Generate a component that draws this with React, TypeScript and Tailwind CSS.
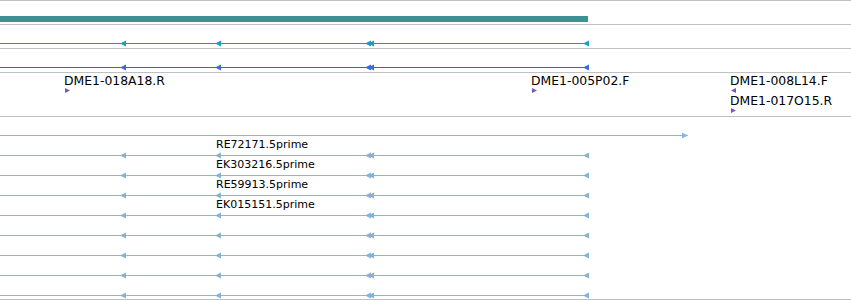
import React from "react";

const EXONS = [120, 215, 365, 368, 583];
const W = 851;

function LeftArrow({ x, y, color }: { x: number; y: number; color: string }) {
  return <polygon points={`${x},${y} ${x + 6},${y - 3} ${x + 6},${y + 3}`} fill={color} />;
}

function Strand({
  y,
  color,
  arrowColor,
  end = 588,
}: {
  y: number;
  color: string;
  arrowColor: string;
  end?: number;
}) {
  const cy = y + 0.5;
  return (
    <g>
      <line x1={0} y1={cy} x2={end} y2={cy} stroke={color} strokeWidth={1} />
      {EXONS.map((x) => (
        <LeftArrow key={x} x={x} y={cy} color={arrowColor} />
      ))}
    </g>
  );
}

function Feature({ label, dir }: { label: string; dir: "left" | "right" }) {
  return (
    <div className="flex flex-col h-[20px]">
      <span className="text-[12.4px] leading-[12px] text-black whitespace-nowrap">{label}</span>
      <svg width="6" height="6" className="mt-[1px] ml-[1px]">
        {dir === "right" ? (
          <polygon points="0,0 5,2.5 0,5" fill="#7858b8" />
        ) : (
          <polygon points="5,0 0,2.5 5,5" fill="#7858b8" />
        )}
      </svg>
    </div>
  );
}

export default function App() {
  const estRows = [38, 58, 78, 98, 118, 138, 158, 178];
  const estLabels = ["RE72171.5prime", "EK303216.5prime", "RE59913.5prime", "EK015151.5prime"];
  return (
    <div className="w-[851px] h-[300px] bg-white overflow-hidden font-['DejaVu_Sans',sans-serif] border-t border-[#c0c0c0]">
      {/* gene span */}
      <div className="h-[24px] border-b border-[#c0c0c0] pt-[15px]">
        <div className="w-[588px] h-[6px] bg-[#409191]" />
      </div>

      {/* transcript A */}
      <div className="h-[24px] border-b border-[#c0c0c0]">
        <svg width={W} height={23} className="block">
          <Strand y={18} color="#1a97b8" arrowColor="#1a9fc0" />
        </svg>
      </div>

      {/* transcript B */}
      <div className="h-[24px] border-b border-[#c0c0c0]">
        <svg width={W} height={23} className="block">
          <Strand y={18} color="#3464c8" arrowColor="#3a6cd4" />
        </svg>
      </div>

      {/* BAC ends */}
      <div className="relative h-[44px] border-b border-[#c0c0c0]">
        <div className="absolute left-[64px] top-[2px]">
          <Feature label="DME1-018A18.R" dir="right" />
        </div>
        <div className="absolute left-[531px] top-[2px]">
          <Feature label="DME1-005P02.F" dir="right" />
        </div>
        <div className="absolute left-[730px] top-[2px] flex flex-col">
          <Feature label="DME1-008L14.F" dir="left" />
          <Feature label="DME1-017O15.R" dir="right" />
        </div>
      </div>

      {/* ESTs */}
      <div className="relative h-[183px] border-b border-[#c0c0c0]">
        <svg width={W} height={182} className="block">
          <line x1={0} y1={18.5} x2={688} y2={18.5} stroke="#88b8dd" strokeWidth={1} />
          <polygon points="688,18.5 682,15.5 682,21.5" fill="#88b8dd" />
          {estRows.map((y) => (
            <Strand key={y} y={y} color="#88b8dd" arrowColor="#80b4dc" />
          ))}
        </svg>
        <div className="absolute left-[216px] top-[22px] flex flex-col">
          {estLabels.map((l) => (
            <span key={l} className="h-[20px] text-[11px] leading-[11px] text-black whitespace-nowrap">
              {l}
            </span>
          ))}
        </div>
      </div>
    </div>
  );
}
